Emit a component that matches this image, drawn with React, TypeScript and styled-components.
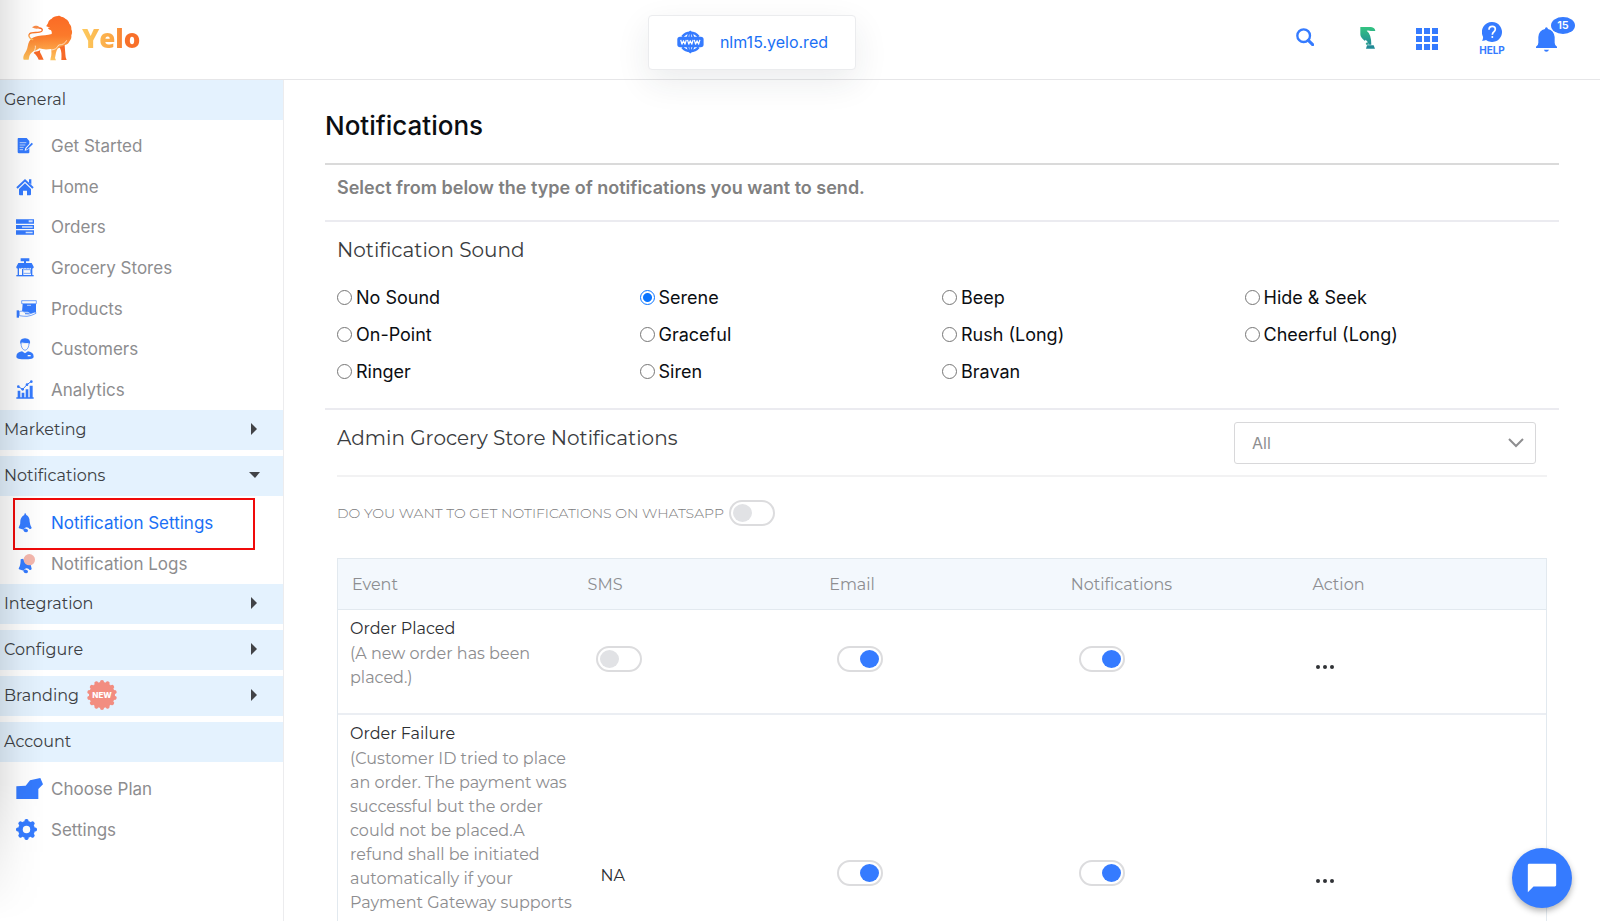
import React, { useState } from "react";
import styled, { createGlobalStyle, css } from "styled-components";

const blue = "#357bff";
const sans = `Inter, "Liberation Sans", sans-serif`;
const display = `Montserrat, Inter, "Liberation Sans", sans-serif`;

const GlobalStyle = createGlobalStyle`
  *, *::before, *::after { box-sizing: border-box; }
  body {
    margin: 0;
    background: #fff;
    color: #0b0e12;
    font-family: ${sans};
    font-size: 17px;
  }
  button, input, select { font: inherit; margin: 0; }
`;

/* ---------- shell ---------- */

const Shell = styled.div`
  position: relative;
  display: flex;
  flex-direction: column;
  height: 100vh;
  overflow: hidden;
`;

const EdgeShade = styled.div`
  position: absolute;
  inset: 0 auto 0 0;
  width: 44px;
  background: linear-gradient(to right, rgba(0, 0, 0, 0.1), rgba(0, 0, 0, 0.03) 50%, transparent);
  mask-image: linear-gradient(to bottom, #000 85%, transparent);
  pointer-events: none;
  z-index: 3;
`;

const Body = styled.div`
  display: flex;
  flex: 1;
  min-height: 0;
`;

/* ---------- header ---------- */

const Header = styled.header`
  display: grid;
  grid-template-columns: 27fr auto 31fr;
  height: 80px;
  flex: none;
  border-bottom: 1px solid #e6e6e8;
`;

const Brand = styled.a`
  display: flex;
  align-items: center;
  align-self: start;
  justify-self: start;
  height: 76px;
  padding-left: 22px;
  gap: 9px;
  text-decoration: none;
`;

const BrandName = styled.span`
  font-family: "Open Sans", sans-serif;
  font-weight: 800;
  font-size: 26px;
  line-height: 32px;
  color: transparent;
  background: linear-gradient(to right, #fdcb5f, #fba544 55%, #f7702a 75%, #f9702a);
  background-clip: text;
`;

const SiteCard = styled.a`
  position: relative;
  z-index: 2;
  display: flex;
  align-items: center;
  align-self: start;
  gap: 16px;
  width: 208px;
  height: 55px;
  margin-top: 15px;
  padding: 0 27px 2px 28px;
  border: 1px solid #ebecee;
  border-radius: 4px;
  background: #fff;
  box-shadow: 0 12px 34px rgba(30, 40, 60, 0.09);
  color: #1a70f5;
  font-size: 16px;
  text-decoration: none;
`;

const Tools = styled.nav`
  display: flex;
  align-items: flex-start;
  justify-content: flex-end;
  padding: 16px 26px 0 0;
`;

const Tool = styled.button<{ $w: number; $top: number; $gap: number }>`
  display: flex;
  flex-direction: column;
  align-items: center;
  width: ${(p) => p.$w}px;
  margin: ${(p) => p.$top}px ${(p) => p.$gap}px 0 0;
  padding: 0;
  border: 0;
  background: none;
  color: ${blue};
  cursor: pointer;
`;

const HelpText = styled.span`
  padding-top: 2px;
  font-size: 10px;
  font-weight: 700;
  line-height: 12px;
`;

const BellTool = styled(Tool)`
  position: relative;
`;

const Count = styled.span`
  position: absolute;
  left: 15px;
  top: -10px;
  width: 24px;
  height: 17px;
  border-radius: 50%;
  background: ${blue};
  color: #fff;
  font-size: 11px;
  font-weight: 600;
  line-height: 17px;
  text-align: center;
`;

/* ---------- sidebar ---------- */

const Sidebar = styled.nav`
  flex: none;
  width: 284px;
  border-right: 1px solid #ececee;
`;

const bandStyle = css`
  display: flex;
  align-items: center;
  width: 100%;
  height: 40px;
  padding: 0 23px 2px 4px;
  border: 0;
  background: #e4f2fe;
  color: #3c3f44;
  font-family: ${display};
  font-size: 16px;
  font-weight: 400;
  text-align: left;
`;

const Band = styled.h2`
  ${bandStyle}
  margin: 0;
`;

const BandButton = styled.button<{ $spaced?: boolean }>`
  ${bandStyle}
  margin-bottom: ${(p) => (p.$spaced ? 6 : 0)}px;
  cursor: pointer;
`;

const BandLabel = styled.span`
  flex: 1;
  display: flex;
  align-items: center;
  gap: 8px;
`;

const List = styled.ul<{ $height: number }>`
  display: grid;
  grid-auto-rows: 1fr;
  height: ${(p) => p.$height}px;
  margin: 0;
  padding: 6px 0 0;
  list-style: none;
`;

const Item = styled.li<{ $marked?: boolean }>`
  position: relative;
  display: flex;
  ${(p) =>
    p.$marked &&
    css`
      &::after {
        content: "";
        position: absolute;
        inset: -4px 28px -7px 13px;
        border: 2px solid #f00a0a;
        pointer-events: none;
      }
    `}
`;

const ItemLink = styled.a<{ $active?: boolean }>`
  display: flex;
  align-items: center;
  flex: 1;
  padding-left: 16px;
  color: ${(p) => (p.$active ? "#1a70f5" : "#8d8d8f")};
  text-decoration: none;
`;

const IconSlot = styled.span`
  display: flex;
  width: 35px;
`;

/* ---------- main ---------- */

const Main = styled.main`
  flex: 1;
  min-width: 0;
  overflow: hidden;
  padding: 25px 41px 0 41px;
`;

const Title = styled.h1`
  margin: 0;
  padding-bottom: 16px;
  border-bottom: 2px solid #dadada;
  font-size: 26px;
  font-weight: 500;
  line-height: 42px;
`;

const Lead = styled.p`
  margin: 0;
  padding: 11px 12px 20px;
  border-bottom: 2px solid #ebebf0;
  color: #808080;
  font-size: 18px;
  font-weight: 600;
  line-height: 24px;
`;

const Section = styled.section`
  padding: 13px 12px 0;
`;

const SoundSection = styled(Section)`
  padding-bottom: 17px;
  border-bottom: 2px solid #ebebf0;
`;

const Heading = styled.h2`
  margin: 0;
  color: #3a3c40;
  font-family: ${display};
  font-size: 20px;
  font-weight: 400;
  line-height: 30px;
`;

const Sounds = styled.div`
  display: grid;
  grid-template-columns: repeat(4, 1fr);
  grid-auto-rows: 37px;
  padding: 14px 0 1px;
  font-size: 18px;
`;

const Sound = styled.label`
  display: flex;
  align-items: center;
  gap: 4px;
`;

const Radio = styled.input`
  appearance: none;
  width: 15px;
  height: 15px;
  border: 1px solid #767676;
  border-radius: 50%;
  background: #fff;
  &:checked {
    border-color: #0a75ff;
    background: radial-gradient(circle, #0a75ff 4px, #fff 5px);
  }
`;

const AdminTop = styled.div`
  display: flex;
  justify-content: space-between;
  padding-bottom: 11px;
  border-bottom: 2px solid #f2f2f3;
`;

const AdminSection = styled(Section)`
  padding-top: 12px;
`;

const SelectWrap = styled.div`
  display: flex;
  align-items: center;
  width: 302px;
  margin-right: 11px;
  color: #8e8e90;
`;

const Select = styled.select`
  appearance: none;
  width: 100%;
  height: 42px;
  padding: 0 17px;
  border: 1px solid #d8d8da;
  border-radius: 3px;
  background: #fff;
  color: #8e8e90;
  font-size: 16px;
`;

const Chevron = styled.svg`
  flex: none;
  margin-left: -28px;
  pointer-events: none;
`;

const AdminHeading = styled(Heading)`
  padding-top: 1px;
`;

const WhatsApp = styled.label`
  display: flex;
  align-items: center;
  gap: 5px;
  height: 81px;
  padding-bottom: 9px;
  color: #7c7c7e;
  font-family: ${display};
  font-size: 14px;
  font-weight: 300;
`;

const Switch = styled.input`
  appearance: none;
  display: block;
  width: 46px;
  height: 26px;
  padding: 2px;
  border: 2px solid #dcdcde;
  border-radius: 13px;
  background: #fff;
  cursor: pointer;
  &::before {
    content: "";
    display: block;
    width: 19px;
    height: 18px;
    border-radius: 50%;
    background: #e1e2e5;
  }
  &:checked::before {
    margin-left: auto;
    background: ${blue};
  }
`;

const Table = styled.table`
  width: 100%;
  table-layout: fixed;
  border-collapse: separate;
  border-spacing: 0;
  border: 1px solid #e2e9ef;
  font-family: ${display};
  font-size: 16px;
`;

const Th = styled.th`
  height: 51px;
  padding: 0 8px;
  border-bottom: 1px solid #e2e9ef;
  background: #f3f8fd;
  color: #8d8e91;
  font-weight: 400;
  text-align: left;
  &:first-child {
    padding-left: 14px;
  }
`;

const Row = styled.tr<{ $height: number }>`
  height: ${(p) => p.$height}px;
`;

const Td = styled.td<{ $left?: number }>`
  padding: 0 0 0 ${(p) => p.$left ?? 16}px;
  border-bottom: 2px solid #ebeef3;
  color: #2d2f33;
`;

const EventTd = styled(Td)`
  padding: 7px 0 0 12px;
  vertical-align: top;
  line-height: 24px;
`;

const EventName = styled.div`
  padding-bottom: 1px;
`;

const EventNote = styled.div`
  color: #8d8d8f;
`;

const MoreButton = styled.button`
  display: block;
  margin: 10px 0 0;
  padding: 0;
  border: 0;
  background: none;
  line-height: 0;
  cursor: pointer;
`;

const SwitchHolder = styled.div`
  padding-bottom: 5px;
`;

const ChatButton = styled.button`
  position: absolute;
  right: 28px;
  bottom: 13px;
  display: flex;
  align-items: center;
  justify-content: center;
  width: 60px;
  height: 60px;
  padding: 0;
  border: 0;
  border-radius: 50%;
  background: ${blue};
  box-shadow: 0 3px 6px rgba(0, 0, 0, 0.3);
  cursor: pointer;
`;

/* ---------- drawings ---------- */

const Lion = () => (
  <svg width="51" height="48" viewBox="66 40 153 144" aria-hidden="true">
    <defs>
      <linearGradient id="lion" x1="0" y1="0" x2="0" y2="1">
        <stop offset="0" stopColor="#fb6a25" />
        <stop offset="0.45" stopColor="#fb7a2b" />
        <stop offset="1" stopColor="#fdc35c" />
      </linearGradient>
    </defs>
    <path
      fill="url(#lion)"
      d="M139 77c1-4 3-6 5-9 1-7 5-11 11-14 4-5 11-8 19-8 4-2 7 0 9 2 6 0 11 3 14 7 6 3 10 8 11 14 5 5 7 11 6 17 3 6 3 12 0 18 1 8-1 13-5 17-3 7-7 11-14 12-7 6-14 10-21 10-3 4-5 8-6 13l-3 16 3 7h-17l1-7c3-9 3-18 1-27-12 2-24 2-35-2-5 4-11 7-17 9-7 4-11 9-13 15l-2 10H71c-2-5-1-10 1-15l7-12c5-10 4-19 9-28 5-9 14-14 26-16 15-2 28-2 41-6 1-5 0-9-3-12-4-1-7-3-8-6 3-1 4-1 6-3-4 1-8 0-11-2z"
    />
    <path fill="#f76a28" d="M104 153c6 0 12-2 17-5-2 5-1 8 2 12l8 17h-15c-3-8-8-15-15-20l3-4zM180 139c5-1 10-3 14-6 1 14 2 27 3 37l3 8h-16c1-14 1-27-4-36z" />
    <path fill="none" stroke="url(#lion)" strokeWidth="4" strokeLinecap="round" d="M98 117c-11-4-14-13-9-18 7-6 28-1 36-7 5-5 0-10-8-10" />
    <path fill="#f98a45" d="M118 79c-6-6-16-5-22 1 6 4 14 6 22 3z" />
    <path fill="none" stroke="#fff" strokeWidth="2" d="M151 148c12 0 20-4 25-15 12 0 20-5 24-14M100 155c5-7 7-13 6-20" />
  </svg>
);

const Globe = () => (
  <svg width="29" height="24" viewBox="0 0 87 72" aria-hidden="true">
    <g fill="none" stroke={blue} strokeWidth="6">
      <path d="M17 19a34 34 0 0 1 53 0M17 53a34 34 0 0 0 53 0" strokeWidth="8" />
      <path d="M34 20q2-11 9-17 8 6 10 17M34 52q2 11 9 17 8-6 10-17" />
      <path d="M43 3v18M43 51v18" />
    </g>
    <rect x="1" y="19" width="85" height="34" rx="9" fill={blue} />
    <g fill="none" stroke="#fff" strokeWidth="4" strokeLinejoin="round">
      <path d="M12 29l4 14 5-11 5 11 4-14" />
      <path d="M34 29l4 14 5-11 5 11 4-14" />
      <path d="M56 29l4 14 5-11 5 11 4-14" />
    </g>
  </svg>
);

const SearchIcon = () => (
  <svg width="18" height="18" viewBox="0 0 54 54" fill="none" stroke={blue}>
    <circle cx="23" cy="23" r="19" strokeWidth="7" />
    <path d="M37 37l13 13" strokeWidth="9" strokeLinecap="round" />
  </svg>
);

const GreenMark = () => (
  <svg width="16" height="22" viewBox="0 0 48 66">
    <defs>
      <linearGradient id="mark" x1="0" y1="0" x2="0" y2="1">
        <stop offset="0" stopColor="#33c481" />
        <stop offset="1" stopColor="#218a96" />
      </linearGradient>
    </defs>
    <path
      fill="url(#mark)"
      d="M1 0h32q12 2 13 12H33q-9-3-13-1 14 10 14 42h-8q-2-10-9-15l-2 4Q1 32 1 22z"
    />
    <path fill="#2a9f8d" d="M17 50l5-6 4 9h-7z" />
    <path fill="#218a96" d="M21 55h20l4 10H18z" />
  </svg>
);

const GridIcon = () => (
  <svg width="22" height="22" viewBox="0 0 22 22" fill={blue}>
    {[0, 8, 16].map((y) => [0, 8, 16].map((x) => <rect key={`${x}-${y}`} x={x} y={y} width="6" height="6" />))}
  </svg>
);

const HelpIcon = () => (
  <svg width="20" height="20" viewBox="0 0 60 60">
    <path fill={blue} d="M30 0a30 30 0 1 1-18 54q-5 3-12 2 4-5 3-12A30 30 0 0 1 30 0z" />
    <path fill="none" stroke="#fff" strokeWidth="5" d="M21 23q0-10 10-10 9 0 9 8 0 5-5 9-4 3-4 8" />
    <circle cx="31" cy="45" r="3" fill="#fff" />
  </svg>
);

const BellIcon = () => (
  <svg width="21" height="25" viewBox="0 0 63 75" fill={blue}>
    <path d="M27 6q0-5 4-5t5 5q18 5 20 24v17q0 8 7 12v4H0v-4q7-4 7-12V30Q8 11 27 6z" />
    <path d="M24 68h15q-2 6-8 6t-7-6z" />
  </svg>
);

const MenuIcons: Record<string, React.ReactNode> = {
  start: (
    <svg width="18" height="18" viewBox="-4 0 54 54" fill={blue}>
      <path d="M3 3h25l8 9v8L24 33l-2 8 8-2 6-5v12q0 3-3 3H5q-4 0-4-4V6q0-3 2-3z" />
      <path d="M7 17h20M7 24h17M7 31h12M7 38h10" stroke="#fff" strokeWidth="2" />
      <path d="M28 33l15-16 4 4-16 16-5 1z" />
    </svg>
  ),
  home: (
    <svg width="18" height="18" viewBox="0 0 54 54" fill={blue}>
      <path d="M3 30L27 7l24 23" fill="none" stroke={blue} strokeWidth="6" />
      <path d="M39 4h7v16l-7-7z" />
      <path d="M9 33l18-17 18 17v16q0 3-3 3h-9V38H21v14h-9q-3 0-3-3z" />
    </svg>
  ),
  orders: (
    <svg width="18" height="16" viewBox="0 0 54 48" fill={blue}>
      <path d="M0 1h54v13H0zM0 18h54v12H0zM0 34h54v13H0z" />
      <path fill="#d4e3ff" d="M38 4h12v6H38zM18 22h32v4H18zM29 38h21v5H29z" />
    </svg>
  ),
  stores: (
    <svg width="18" height="19" viewBox="0 0 54 57" fill={blue}>
      <path d="M14 1h26v9H30v5h17l6 11v3q-5 5-8 0-5 5-9 0-4 5-9 0-4 5-9 0-5 5-9 0-4 5-8 0v-3l6-11h17v-5h-10z" />
      <path fill="none" stroke={blue} strokeWidth="4" d="M7 30v21M47 30v21M20 33v18" />
      <path fill="none" stroke={blue} strokeWidth="2" d="M23 35h21v11H23" />
      <path d="M1 51h52v4H1z" />
    </svg>
  ),
  products: (
    <svg width="21" height="18" viewBox="0 0 63 54" fill={blue}>
      <path d="M20 12h40v26l-13 4-12-7-17 0z" />
      <path fill="#fff" stroke={blue} strokeWidth="2" d="M17 2h44v9H17z" />
      <path d="M33 16h12" stroke="#fff" strokeWidth="2" />
      <path d="M2 31h7v22H2z" />
      <path fill="#fff" stroke={blue} strokeWidth="2" d="M10 34q10-2 15 2h15q3 4-3 5H27l13 1 17-6q4 1 3 4-15 8-27 9-12 0-23-2z" />
    </svg>
  ),
  customers: (
    <svg width="18" height="22" viewBox="0 0 54 66" fill={blue}>
      <path fill="#fff" stroke={blue} strokeWidth="2" d="M15 14q0 20 12 23 12-3 12-23z" />
      <path d="M13 19Q9 1 27 1t15 18l-3-5q-12 3-20-2-5 1-6 7z" />
      <path d="M18 40l9 6 9-6q17 3 17 16 0 4-6 6-20 4-40 0-6-2-6-6 0-13 17-16z" />
      <path fill="#fff" d="M35 51h9v4h-9z" />
    </svg>
  ),
  analytics: (
    <svg width="18" height="19" viewBox="0 0 54 57" fill={blue}>
      <path d="M5 32h8v20H5zM17 38h8v14h-8zM29 28h8v24h-8zM41 17h9v35h-9zM1 52h52v4H1z" />
      <path fill="none" stroke={blue} strokeWidth="3" d="M7 20l13 8 13-14 13-10" />
      <circle cx="7" cy="20" r="4" />
      <circle cx="20" cy="28" r="4" />
      <circle cx="33" cy="14" r="4" />
      <circle cx="46" cy="5" r="4" />
    </svg>
  ),
  bell: (
    <svg width="18" height="20" viewBox="0 0 54 60" fill={blue}>
      <path d="M25 6q-1-5 3-6l3 6q10 5 10 20 1 10 6 18-1 5-6 4l-4-4q-7-3-11 2l-3 4-14-4q-2-2 0-5 5-7 4-18Q14 12 25 6z" />
      <path d="M22 52q2-6 8-5 7 1 6 6-1 5-6 5-6 0-8-6z" />
    </svg>
  ),
  logs: (
    <svg width="20" height="20" viewBox="0 0 60 60" fill={blue}>
      <path d="M14 16l8-2q4 19 22 18l3 12q-1 5-6 4l-4-4q-7-3-11 2l-3 4-14-4q-2-2 0-5 5-7 5-25z" />
      <path d="M22 52q2-6 8-5 7 1 6 6-1 5-6 5-6 0-8-6z" />
      <circle cx="40" cy="17" r="17" fill="#f5b8ae" />
    </svg>
  ),
  plan: (
    <svg width="27" height="21" viewBox="0 0 81 63" fill={blue}>
      <path d="M1 25l28-2 13-16 31-7 8 19-14 14v30H1z" />
    </svg>
  ),
  gear: (
    <svg width="21" height="21" viewBox="-31 -31 62 62" fill={blue}>
      <circle r="25" />
      {[0, 45, 90, 135].map((a) => (
        <rect key={a} x="-6" y="-31" width="12" height="62" rx="5" transform={`rotate(${a})`} />
      ))}
      <circle r="11" fill="#fff" />
    </svg>
  ),
};

const NewBadge = () => (
  <svg width="30" height="30" viewBox="-15 -15 30 30">
    <g fill="#f28d80">
      <circle r="13" />
      {Array.from({ length: 14 }, (_, i) => (
        <circle key={i} cx="0" cy="-13" r="2" transform={`rotate(${(i * 360) / 14})`} />
      ))}
    </g>
    <text y="3" textAnchor="middle" fontSize="8" fontWeight="800" fontFamily="Inter, sans-serif" fill="#fff">
      NEW
    </text>
  </svg>
);

const Caret = ({ open }: { open?: boolean }) => (
  <svg width="12" height="12" viewBox="0 0 12 12" fill="#414347">
    <path d={open ? "M1 3h11L7 9z" : "M3 0v12l6-6z"} />
  </svg>
);

const Dots = () => (
  <svg width="18" height="6" viewBox="0 0 18 6" fill="#303236">
    <circle cx="2" cy="3" r="2" />
    <circle cx="9" cy="3" r="2" />
    <circle cx="16" cy="3" r="2" />
  </svg>
);

/* ---------- data ---------- */

type Entry = { icon: string; label: string; active?: boolean };

const general: Entry[] = [
  { icon: "start", label: "Get Started" },
  { icon: "home", label: "Home" },
  { icon: "orders", label: "Orders" },
  { icon: "stores", label: "Grocery Stores" },
  { icon: "products", label: "Products" },
  { icon: "customers", label: "Customers" },
  { icon: "analytics", label: "Analytics" },
];

const notificationItems: Entry[] = [
  { icon: "bell", label: "Notification Settings", active: true },
  { icon: "logs", label: "Notification Logs" },
];

const account: Entry[] = [
  { icon: "plan", label: "Choose Plan" },
  { icon: "gear", label: "Settings" },
];

const sounds = [
  "No Sound", "Serene", "Beep", "Hide & Seek",
  "On-Point", "Graceful", "Rush (Long)", "Cheerful (Long)",
  "Ringer", "Siren", "Bravan",
];

const events = [
  { name: "Order Placed", note: "(A new order has been placed.)", sms: true, height: 105 },
  {
    name: "Order Failure",
    note: "(Customer ID tried to place an order. The payment was successful but the order could not be placed.A refund shall be initiated automatically if your Payment Gateway supports",
    sms: false,
    height: 323,
  },
];

const Menu = ({ items, height }: { items: Entry[]; height: number }) => (
  <List $height={height}>
    {items.map((it) => (
      <Item key={it.label} $marked={it.active}>
        <ItemLink href="#" $active={it.active}>
          <IconSlot>{MenuIcons[it.icon]}</IconSlot>
          {it.label}
        </ItemLink>
      </Item>
    ))}
  </List>
);

export default function App() {
  const [sound, setSound] = useState("Serene");

  return (
    <>
      <GlobalStyle />
      <Shell>
        <Header>
          <Brand href="#">
            <Lion />
            <BrandName>Yelo</BrandName>
          </Brand>
          <SiteCard href="#">
            <Globe />
            nlm15.yelo.red
          </SiteCard>
          <Tools>
            <Tool $w={18} $top={12} $gap={46} aria-label="Search"><SearchIcon /></Tool>
            <Tool $w={16} $top={11} $gap={40} aria-label="Dispatch"><GreenMark /></Tool>
            <Tool $w={22} $top={12} $gap={40} aria-label="Apps"><GridIcon /></Tool>
            <Tool $w={28} $top={6} $gap={30}>
              <HelpIcon />
              <HelpText>HELP</HelpText>
            </Tool>
            <BellTool $w={21} $top={11} $gap={17} aria-label="Alerts">
              <BellIcon />
              <Count>15</Count>
            </BellTool>
          </Tools>
        </Header>

        <Body>
          <Sidebar>
            <Band>General</Band>
            <Menu items={general} height={290} />
            <BandButton $spaced><BandLabel>Marketing</BandLabel><Caret /></BandButton>
            <BandButton><BandLabel>Notifications</BandLabel><Caret open /></BandButton>
            <Menu items={notificationItems} height={88} />
            <BandButton $spaced><BandLabel>Integration</BandLabel><Caret /></BandButton>
            <BandButton $spaced><BandLabel>Configure</BandLabel><Caret /></BandButton>
            <BandButton $spaced>
              <BandLabel>Branding <NewBadge /></BandLabel>
              <Caret />
            </BandButton>
            <Band>Account</Band>
            <Menu items={account} height={88} />
          </Sidebar>

          <Main>
            <Title>Notifications</Title>
            <Lead>Select from below the type of notifications you want to send.</Lead>

            <SoundSection>
              <Heading>Notification Sound</Heading>
              <Sounds>
                {sounds.map((s) => (
                  <Sound key={s}>
                    <Radio type="radio" name="sound" checked={sound === s} onChange={() => setSound(s)} />
                    {s}
                  </Sound>
                ))}
              </Sounds>
            </SoundSection>

            <AdminSection>
              <AdminTop>
                <AdminHeading>Admin Grocery Store Notifications</AdminHeading>
                <SelectWrap>
                  <Select aria-label="Filter notifications" defaultValue="All">
                    <option>All</option>
                  </Select>
                  <Chevron width="16" height="10" viewBox="0 0 16 10" fill="none" stroke="currentColor" strokeWidth="2">
                    <path d="M1 1l7 7 7-7" />
                  </Chevron>
                </SelectWrap>
              </AdminTop>

              <WhatsApp>
                DO YOU WANT TO GET NOTIFICATIONS ON WHATSAPP
                <Switch type="checkbox" />
              </WhatsApp>

              <Table>
                <thead>
                  <tr>
                    <Th>Event</Th>
                    <Th>SMS</Th>
                    <Th>Email</Th>
                    <Th>Notifications</Th>
                    <Th>Action</Th>
                  </tr>
                </thead>
                <tbody>
                  {events.map((e) => (
                    <Row key={e.name} $height={e.height}>
                      <EventTd>
                        <EventName>{e.name}</EventName>
                        <EventNote>{e.note}</EventNote>
                      </EventTd>
                      {e.sms ? (
                        <Td>
                          <SwitchHolder><Switch type="checkbox" aria-label={`${e.name} SMS`} /></SwitchHolder>
                        </Td>
                      ) : (
                        <Td $left={21}>NA</Td>
                      )}
                      <Td>
                        <SwitchHolder><Switch type="checkbox" defaultChecked aria-label={`${e.name} email`} /></SwitchHolder>
                      </Td>
                      <Td>
                        <SwitchHolder><Switch type="checkbox" defaultChecked aria-label={`${e.name} notifications`} /></SwitchHolder>
                      </Td>
                      <Td $left={12}>
                        <MoreButton aria-label={`${e.name} actions`}><Dots /></MoreButton>
                      </Td>
                    </Row>
                  ))}
                </tbody>
              </Table>
            </AdminSection>
          </Main>
        </Body>

        <EdgeShade />
        <ChatButton aria-label="Open chat">
          <svg width="34" height="34" viewBox="0 0 24 24" fill="#fff">
            <path d="M21 2H3c-.6 0-1 .4-1 1v19l4-4h15c.6 0 1-.4 1-1V3c0-.6-.4-1-1-1z" />
          </svg>
        </ChatButton>
      </Shell>
    </>
  );
}
